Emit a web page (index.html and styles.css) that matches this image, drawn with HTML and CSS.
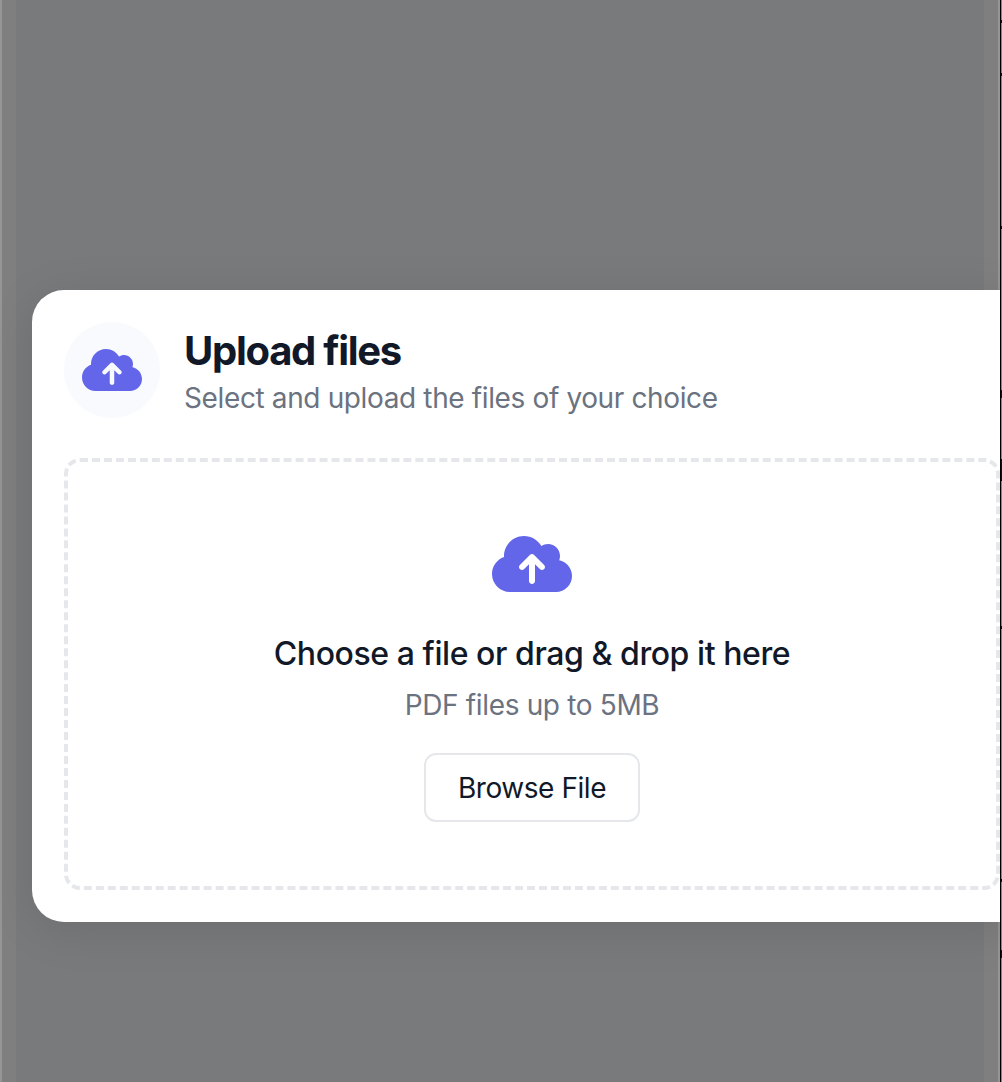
FILE: index.html
```html
<!DOCTYPE html>
<html lang="en">
<head>
<meta charset="utf-8">
<title>Upload files</title>
<link rel="stylesheet" href="styles.css">
</head>
<body>
<svg class="defs" width="0" height="0" aria-hidden="true">
  <symbol id="cloud" viewBox="0 0 640 512"><path d="M144 480C64.500 480 0 415.500 0 336c0-62.800 40.200-116.200 96.200-135.900c-.1-2.700-.2-5.400-.2-8.100c0-88.400 71.600-160 160-160c59.300 0 111 32.200 138.700 80.200C409.900 102 428.300 96 448 96c53 0 96 43 96 96c0 12.200-2.300 23.800-6.400 34.600C596 238.400 640 290.100 640 352c0 70.700-57.300 128-128 128H144zm79-217c-9.400 9.400-9.400 24.600 0 33.900s24.600 9.400 33.900 0l39-39V392c0 13.300 10.700 24 24 24s24-10.700 24-24V257.900l39 39c9.400 9.400 24.600 9.400 33.900 0s9.400-24.600 0-33.900l-80-80c-9.400-9.400-24.600-9.400-33.900 0l-80 80z"/></symbol>
</svg>
<div class="backdrop">
  <main class="panel">
    <section class="modal">
      <header class="header">
        <span class="badge"><svg class="icon-small"><use href="#cloud"/></svg></span>
        <div>
          <h1 class="title">Upload files</h1>
          <p class="subtitle">Select and upload the files of your choice</p>
        </div>
      </header>
      <div class="dropzone">
        <svg class="icon-large"><use href="#cloud"/></svg>
        <p class="prompt">Choose a file or drag &amp; drop it here</p>
        <p class="hint">PDF files up to 5MB</p>
        <button class="browse" type="button">Browse File</button>
      </div>
    </section>
  </main>
  <aside class="edge">
    <i class="mark" style="top:20px"></i>
    <i class="mark" style="top:73px"></i>
    <i class="mark" style="top:226px"></i>
    <i class="mark" style="top:390px;height:8px"></i>
    <i class="mark" style="top:459px;height:22px"></i>
    <i class="mark" style="top:626px"></i>
    <i class="mark" style="top:879px"></i>
    <i class="mark" style="top:950px;height:8px"></i>
  </aside>
</div>
</body>
</html>
```
FILE: styles.css
```css
* { box-sizing: border-box; }
body { margin: 0; font-family: Inter, "Liberation Sans", sans-serif; overflow: hidden; }
.defs { display: block; }
.backdrop { display: flex; width: 1002px; height: 1082px; }
.panel {
  width: 1000px;
  height: 1082px;
  padding-top: 290px;
  overflow: hidden;
  background: linear-gradient(90deg, #959595 2px, #7f7f7f 2px 16px, #797a7c 16px 984px, #7f7f7f 984px 998px, #959595 998px);
}
.modal {
  width: 1000px;
  height: 632px;
  margin-left: 32px;
  padding: 32px;
  border-radius: 32px;
  background: #fff;
  box-shadow: 0 8px 48px rgba(0, 0, 0, .1);
}
.header { display: flex; align-items: center; gap: 24px; height: 96px; }
.badge {
  display: flex;
  align-items: center;
  justify-content: center;
  width: 96px;
  height: 96px;
  border-radius: 50%;
  background: #f8fafe;
}
.icon-small { width: 60px; height: 48px; fill: #6366e9; }
.icon-large { width: 80px; height: 64px; fill: #6366e9; }
.title { margin: 1px 0 -1px; font-size: 40px; line-height: 56px; font-weight: 700; letter-spacing: -1.28px; color: #111827; }
.subtitle { margin: 0; font-size: 28px; line-height: 40px; letter-spacing: -.37px; color: #6b7280; }
.dropzone {
  display: flex;
  flex-direction: column;
  align-items: center;
  width: 936px;
  height: 432px;
  margin-top: 40px;
  padding-top: 70px;
  border: 4px dashed #e5e7eb;
  border-radius: 16px;
}
.prompt { margin: 34px 0 0; font-size: 32px; line-height: 48px; font-weight: 500; letter-spacing: -.43px; color: #111827; white-space: nowrap; }
.hint { margin: 7px 0 0; font-size: 28px; line-height: 40px; letter-spacing: -.34px; color: #6b7280; }
.browse {
  width: 216px;
  height: 69px;
  margin-top: 28px;
  padding: 0;
  border: 2px solid #e5e7eb;
  border-radius: 12px;
  background: #fff;
  font: 400 28px/40px Inter, "Liberation Sans", sans-serif;
  letter-spacing: -.45px;
  color: #111827;
}
.edge { position: relative; width: 2px; background: linear-gradient(90deg, #000 1px, #858585 1px); }
.mark { position: absolute; left: 1px; width: 1px; height: 3px; background: #111; }
```
